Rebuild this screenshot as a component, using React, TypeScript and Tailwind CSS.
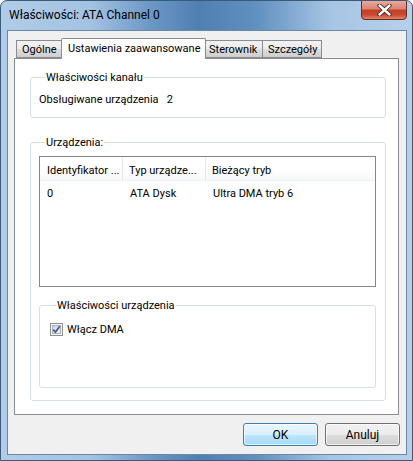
import { ReactNode } from 'react';

const font = { fontFamily: 'Roboto, "Liberation Sans", sans-serif' };

const Tab = ({ label, active, w }: { label: string; active?: boolean; w: string }) =>
  active ? (
    <div
      className={`${w} relative z-10 -mx-[2px] h-[21px] -mb-px border border-b-0 border-[#898c95] bg-white pl-[6px] pt-[2px] text-[11px] leading-[15px] text-black whitespace-nowrap rounded-t-[2px]`}
    >
      {label}
    </div>
  ) : (
    <div
      className={`${w} mt-[2px] h-[18px] border border-[#898c95] -ml-px first:ml-0 bg-[linear-gradient(#f2f2f2,#ebebeb_50%,#dddddd_51%,#cfcfcf)] pl-[5px] pt-[1px] text-[11px] leading-[15px] text-black whitespace-nowrap`}
    >
      {label}
    </div>
  );

const Group = ({ title, className, children }: { title: string; className: string; children: ReactNode }) => (
  <fieldset className={`border border-[#d5dfe5] rounded-[3px] ${className}`}>
    <legend className="ml-[6px] px-[1px] text-[11px] leading-[15px] text-black">{title}</legend>
    {children}
  </fieldset>
);

const Checkbox = () => (
  <svg width="13" height="13" viewBox="0 0 13 13">
    <defs>
      <linearGradient id="cb" x1="0" y1="0" x2="1" y2="1">
        <stop offset="0" stopColor="#cbcfd5" />
        <stop offset="1" stopColor="#f6f6f6" />
      </linearGradient>
    </defs>
    <rect x="0.5" y="0.5" width="12" height="12" fill="#f4f4f4" stroke="#8e8f8f" />
    <rect x="2.5" y="2.5" width="8" height="8" fill="url(#cb)" stroke="#aeb3b9" />
    <path d="M3.2 6.6 L5.4 9 L9.8 3.2" fill="none" stroke="#4a5f97" strokeWidth="1.8" />
  </svg>
);

const cell = 'whitespace-nowrap overflow-hidden';

export default function App() {
  return (
    <div style={font} className="w-[413px] h-[461px] flex flex-col rounded-t-[7px] border border-[#3b5a78] bg-[linear-gradient(90deg,#b0cce8_0%,#a3c2e2_22%,#6d98c6_36%,#4f80b2_48%,#6090bf_62%,#a6c5e4_80%,#b6d0ea_100%)] overflow-hidden">
      <div className="h-[29px] flex items-start">
        <div className="pl-[8px] pt-[7px] text-[12px] leading-[15px] text-black">Właściwości: ATA Channel 0</div>
        <div className="ml-auto mr-[5px] -mt-px w-[46px] h-[20px] rounded-b-[4px] border border-[#6b2a1f] bg-[linear-gradient(#e9a99a,#d88470_45%,#c33f28_50%,#c9482f_75%,#e0826a)] flex items-center justify-center">
          <svg width="15" height="12" viewBox="0 0 15 12">
            <path d="M2.5 1.5 L12.5 10.5 M12.5 1.5 L2.5 10.5" stroke="#4a2018" strokeWidth="4.2" strokeLinecap="round" />
            <path d="M2.5 1.5 L12.5 10.5 M12.5 1.5 L2.5 10.5" stroke="#ffffff" strokeWidth="2.4" strokeLinecap="round" />
          </svg>
        </div>
      </div>
      <div className="ml-[6px] w-[400px] h-[425px] border border-[#6b87a4] bg-[#f0f0f0] flex flex-col">
        <div className="mt-[7px] ml-[8px] flex items-start">
          <Tab label="Ogólne" w="w-[47px]" />
          <Tab label="Ustawienia zaawansowane" w="w-[145px]" active />
          <Tab label="Sterownik" w="w-[60px]" />
          <Tab label="Szczegóły" w="w-[60px]" />
        </div>
        <div className="ml-[6px] w-[385px] h-[357px] border border-[#898c95] bg-white flex flex-col">
          <Group title="Właściwości kanału" className="mt-[11px] ml-[15px] w-[356px] h-[48px] px-[8px]">
            <div className="pt-[7px] text-[11px] leading-[15px] text-black whitespace-nowrap">
              Obsługiwane urządzenia&nbsp;&nbsp;&nbsp;2
            </div>
          </Group>
          <Group title="Urządzenia:" className="mt-[17px] ml-[15px] w-[356px] h-[266px] pl-[8px] pr-[9px]">
            <div className="mt-[6px] h-[131px] border border-[#828790] bg-white">
              <div className="h-[24px] flex text-[11px] leading-[15px] text-black border-b border-[#eef0f3] bg-[linear-gradient(#ffffff,#ffffff_50%,#f7f8fa)]">
                <div className={`w-[83px] pl-[7px] pt-[6px] border-r border-[#e5e5e5] ${cell}`}>Identyfikator ...</div>
                <div className={`w-[83px] pl-[6px] pt-[6px] border-r border-[#e5e5e5] ${cell}`}>Typ urządze...</div>
                <div className={`flex-1 pl-[6px] pt-[6px] ${cell}`}>Bieżący tryb</div>
              </div>
              <div className="flex pt-[5px] text-[11px] leading-[15px] text-black">
                <div className={`w-[83px] pl-[7px] ${cell}`}>0</div>
                <div className={`w-[83px] pl-[7px] ${cell}`}>ATA Dysk</div>
                <div className={`flex-1 pl-[7px] ${cell}`}>Ultra DMA tryb 6</div>
              </div>
            </div>
            <Group title="Właściwości urządzenia" className="mt-[11px] h-[90px] px-[10px]">
              <div className="pt-[9px] flex items-center gap-[4px] text-[11px] leading-[15px] text-black">
                <Checkbox />
                <span>Włącz DMA</span>
              </div>
            </Group>
          </Group>
        </div>
        <div className="mt-[8px] mr-[6px] flex justify-end gap-[7px]">
          <button className="w-[75px] h-[23px] rounded-[3px] border border-[#3c7fb1] bg-[linear-gradient(#eaf6fd,#d9f0fc_50%,#bee6fd_51%,#a7d9f5)] shadow-[inset_0_0_0_1px_#ffffffaa] text-[12px] text-black">
            OK
          </button>
          <button className="w-[75px] h-[23px] rounded-[3px] border border-[#707070] bg-[linear-gradient(#f2f2f2,#ebebeb_50%,#dddddd_51%,#cfcfcf)] shadow-[inset_0_0_0_1px_#ffffffaa] text-[12px] text-black">
            Anuluj
          </button>
        </div>
      </div>
    </div>
  );
}
